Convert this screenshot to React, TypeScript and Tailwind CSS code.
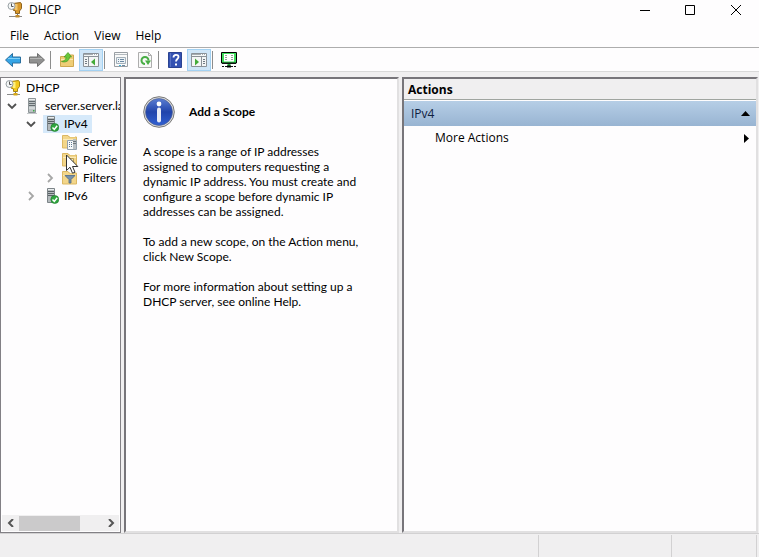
import type { ReactNode } from "react";

function DhcpIcon({ muted = false }: { muted?: boolean }) {
  return (
    <svg viewBox="0 0 16 16" className="h-4 w-4 shrink-0" aria-hidden="true">
      <path d="M6 1.5L13.500 0.500 14.500 2v4.500L12.500 9v2.500h-4V9L6 8z" fill={muted ? "#d9982c" : "#f2c81c"} stroke={muted ? "#8f6420" : "#a8860e"} />
      <path d="M8 2h2.500v6H8z" fill={muted ? "#f2c56c" : "#fff07a"} />
      <path d="M10 11.500h1V14h-1z" fill="#777" />
      <path d="M2 14.500h13" stroke="#8a8a8a" />
      <path d="M8.500 13h4v2.500h-4z" fill={muted ? "#c08a2c" : "#d8a818"} />
      <circle cx="4.500" cy="4" r="3.500" fill="#f4f6f6" stroke="#9aa1a6" />
      <path d="M4.500 1.500v3h2" fill="none" stroke="#555" />
    </svg>
  );
}

function ServerIcon() {
  return (
    <svg viewBox="0 0 16 16" className="h-4 w-4 shrink-0" aria-hidden="true">
      <path d="M4.500 0.500h7v14h-7z" fill="#bcc2c4" stroke="#8d9497" />
      <path d="M5 1.500h6M5 10h6" stroke="#e9edee" />
      <path d="M5 3.500h6M5 5.500h6M5 7.500h6" stroke="#646c70" />
      <path d="M9 12h1.500v1.500H9z" fill="#3ba844" />
      <path d="M3 15.500h10" stroke="#c4c8ca" />
    </svg>
  );
}

function ServerOkIcon() {
  return (
    <svg viewBox="0 0 16 16" className="h-4 w-4 shrink-0" aria-hidden="true">
      <path d="M4.500 0.500h7v14h-7z" fill="#b4babd" stroke="#7d8488" />
      <path d="M5 1.500h6" stroke="#e9edee" />
      <path d="M5 3.500h6M5 5.500h6M5 7.500h6" stroke="#596165" />
      <circle cx="11.800" cy="11.500" r="4" fill="#2fa53e" stroke="#1f7a2b" strokeWidth="0.600" />
      <path d="M9.500 11.500l1.800 1.900 2.900-3.600" fill="none" stroke="#fff" strokeWidth="1.500" />
    </svg>
  );
}

function FolderIcon({ kind }: { kind: "options" | "policies" | "filters" }) {
  return (
    <svg viewBox="0 0 16 16" className="h-4 w-4 shrink-0" aria-hidden="true">
      <path d="M0.500 14V1.500h5.500l1 1.500h7.500V14z" fill="#f3d68a" stroke="#dcb863" />
      <path d="M8 2.500h5" stroke="#fff" />
      <path d="M1 5.500h13" stroke="#fbeab8" />
      {kind === "options" && (
        <>
          <path d="M5.500 6.500h9v9h-9z" fill="#f7f9fa" stroke="#93a1ad" />
          <path d="M11 5h3v10h-3z" fill="#b9c0c5" />
          <path d="M7 8.500h3M7 10.500h3M7 12.500h3" stroke="#5f7b94" strokeDasharray="1 1" />
          <path d="M11 7.500h3M11 9.500h3" stroke="#6d757a" />
        </>
      )}
      {kind === "policies" && <path d="M6.500 6.500h5v6h-5z" fill="#f3e6bb" stroke="#b89d57" />}
      {kind === "filters" && <path d="M3 5.500h10L9 9.500V13H7V9.500z" fill="#7591ad" stroke="#4c6783" strokeWidth="0.800" />}
    </svg>
  );
}

function Chevron({ open = false }: { open?: boolean }) {
  return (
    <svg viewBox="0 0 10 10" className="h-[10px] w-[10px]" aria-hidden="true">
      <path d={open ? "M1 3l4 4 4-4" : "M3 1l4 4-4 4"} fill="none" stroke={open ? "#505050" : "#a6a6a6"} strokeWidth="1.800" />
    </svg>
  );
}

function Arrow({ back = false }: { back?: boolean }) {
  return (
    <svg viewBox="0 0 16 14" className="h-[14px] w-4" aria-hidden="true">
      <path
        d={back ? "M0.500 7L7.500 0.500V4h8v6h-8v3.500z" : "M15.500 7L8.500 0.500V4h-8v6h8v3.500z"}
        fill={back ? "#35a4e6" : "#909090"}
        stroke={back ? "#2a6f9f" : "#707070"}
      />
      <path d={back ? "M3 5.500h12" : "M1 5.500h12"} stroke={back ? "#7fd0f8" : "#b4b4b4"} />
    </svg>
  );
}

function UpFolderIcon() {
  return (
    <svg viewBox="0 0 16 16" className="h-4 w-4" aria-hidden="true">
      <path d="M1.500 14.500v-10h6l1-1.500h6v11.500z" fill="#efcd76" stroke="#cfa850" />
      <path d="M2 7.500h12" stroke="#fbe8ae" />
      <path d="M2.500 9.500C6 9 7 7 7 5H5l4-4.500L12.500 5h-2c0 3.500-3.500 6-8 4.500z" fill="#68c63a" stroke="#44991f" strokeWidth="0.700" />
    </svg>
  );
}

function PaneIcon({ flip = false }: { flip?: boolean }) {
  return (
    <svg viewBox="0 0 16 14" className="h-[14px] w-4" aria-hidden="true">
      <path d="M0.500 0.500h15v13H0.500z" fill="#f4f6f6" stroke="#8b9298" />
      <path d="M1 1.500h14" stroke="#a5acb1" />
      <path d="M1 3.500h14" stroke="#8b9298" />
      <path d="M10 1h1v1h-1zM12 1h1v1h-1zM14 1h1v1h-1z" fill="#fff" />
      <path d={flip ? "M10.500 4v9" : "M5.500 4v9"} stroke="#8b9298" />
      <path d={flip ? "M12 6.500h2M12 8.500h2M12 10.500h2" : "M2 6.500h2M2 8.500h2M2 10.500h2"} stroke="#707a82" />
      <path d={flip ? "M4 5.500l4 3.500-4 3.500z" : "M12 5.500L8 9l4 3.500z"} fill="#43ab3a" />
    </svg>
  );
}

function PropertiesIcon() {
  return (
    <svg viewBox="0 0 16 16" className="h-4 w-4" aria-hidden="true">
      <path d="M1.500 0.500h13v14h-13z" fill="#fafafa" stroke="#9a9fa4" />
      <path d="M2 2.500h12" stroke="#b3b9be" />
      <path d="M3.500 5.500h9v6h-9z" fill="#eef3f6" stroke="#a4b0ba" />
      <path d="M5 7.500h1M7 7.500h4M5 9.500h1M7 9.500h4M9 13.500h3" stroke="#6b88a2" />
      <path d="M6 13.500h2" stroke="#36b4e0" />
    </svg>
  );
}

function RefreshIcon() {
  return (
    <svg viewBox="0 0 16 16" className="h-4 w-4" aria-hidden="true">
      <path d="M1.500 0.500h10l3 3v12h-13z" fill="#f8f8f8" stroke="#adadad" />
      <path d="M11.500 0.500v3h3" fill="none" stroke="#adadad" />
      <path d="M8 12a3.500 3.500 0 1 1 3.500-3.500" fill="none" stroke="#48ad44" strokeWidth="2" />
      <path d="M8 8.500h6L11 13z" fill="#48ad44" />
    </svg>
  );
}

function HelpIcon() {
  return (
    <svg viewBox="0 0 14 16" className="h-4 w-[14px]" aria-hidden="true">
      <path d="M0.500 0.500h13v15h-13z" fill="#3351b2" stroke="#2b4391" />
      <path d="M2.500 1v14" stroke="#5671c4" />
      <path d="M5.500 5.500c0-3.500 5-3.500 5-0.500 0 2-2.500 2-2.500 4.500" fill="none" stroke="#fff" strokeWidth="1.800" />
      <path d="M7 11.500h2v2H7z" fill="#fff" />
    </svg>
  );
}

function MonitorIcon() {
  return (
    <svg viewBox="0 0 16 16" className="h-4 w-4" aria-hidden="true">
      <path d="M0.500 0.500h15v10.500h-15z" fill="#3fdc5c" stroke="#000" />
      <path d="M3 2h10v7.500H3z" fill="#fff" />
      <path d="M4 3.500h2M10 3.500h2M4 5.500h2M10 5.500h2M4 7.500h2M10 7.500h2" stroke="#8fa593" />
      <path d="M1 11.500h14" stroke="#111" />
      <path d="M6.500 12h3v2h-3z" fill="#23a53c" />
      <path d="M1 14.500h5M10 14.500h5" stroke="#111" strokeDasharray="2 1" />
      <path d="M6 14.500h4" stroke="#000" strokeWidth="2" />
    </svg>
  );
}

function InfoIcon() {
  return (
    <svg viewBox="0 0 32 32" className="h-8 w-8 shrink-0" aria-hidden="true">
      <defs>
        <linearGradient id="info-blue" x2="0" y2="1">
          <stop stopColor="#5b7ed2" />
          <stop offset="0.500" stopColor="#2144ab" />
          <stop offset="1" stopColor="#3160d2" />
        </linearGradient>
      </defs>
      <circle cx="16" cy="16" r="15.300" fill="#dedede" stroke="#777" strokeWidth="1" />
      <circle cx="16" cy="16" r="13.500" fill="url(#info-blue)" stroke="#4d5b86" strokeWidth="0.600" />
      <circle cx="16" cy="8" r="2.400" fill="#fff" />
      <path d="M16 13.500v11" stroke="#e9ecf6" strokeWidth="4" strokeLinecap="round" />
    </svg>
  );
}

function Divider() {
  return (
    <span className="flex h-[22px] w-[6px] items-center pl-px">
      <span className="h-[18px] w-px bg-[#8d8d8d]" />
    </span>
  );
}

function ToolButton({ label, active = false, children }: { label: string; active?: boolean; children: ReactNode }) {
  return (
    <button
      aria-label={label}
      className={`flex h-[22px] w-6 items-center justify-center ${active ? "border border-[#a3d1f2] bg-[#cfe6f8]" : ""}`}
    >
      {children}
    </button>
  );
}

type TreeRowProps = { indent: string; open?: boolean; icon: ReactNode; label: string; selected?: boolean };

function TreeRow({ indent, open, icon, label, selected = false }: TreeRowProps) {
  return (
    <li className={`flex h-[18px] items-center whitespace-nowrap ${indent}`}>
      <span className="flex w-[17px] shrink-0 items-center">
        {open !== undefined && (
          <button aria-label={`Toggle ${label}`}>
            <Chevron open={open} />
          </button>
        )}
      </span>
      <span className={`flex h-[18px] items-center gap-[5px] pr-1 ${selected ? "bg-[#d6e9fa]" : ""}`}>
        {icon}
        {label}
      </span>
    </li>
  );
}

export default function App() {
  return (
    <div className="flex h-screen flex-col overflow-hidden bg-[#f0eff0] font-['Open_Sans','Noto_Sans',sans-serif] text-xs text-black">
      <header className="flex h-5 shrink-0 items-center bg-[#fefdfe] pl-[7px]">
        <DhcpIcon muted />
        <h1 className="flex-1 pl-[6px]">DHCP</h1>
        <button aria-label="Minimize" className="flex w-[45px] justify-center pb-px">
          <svg viewBox="0 0 10 10" className="h-[10px] w-[10px]"><path d="M0 5.500h10" stroke="#000" /></svg>
        </button>
        <button aria-label="Maximize" className="flex w-[46px] justify-center pb-px">
          <svg viewBox="0 0 10 10" className="h-[10px] w-[10px]"><path d="M0.500 0.500h9v9h-9z" fill="none" stroke="#000" /></svg>
        </button>
        <button aria-label="Close" className="flex w-[46px] justify-center pb-px">
          <svg viewBox="0 0 10 10" className="h-[10px] w-[10px]"><path d="M0 0l10 10M10 0L0 10" stroke="#000" /></svg>
        </button>
      </header>
      <nav className="flex h-[27px] shrink-0 items-center gap-[15px] bg-[#fefdfe] pt-[5px] pl-[10px]">
        <button>File</button>
        <button>Action</button>
        <button>View</button>
        <button>Help</button>
      </nav>
      <div className="flex h-[25px] shrink-0 items-end border-y border-t-[#adadad] border-b-[#d9d9d9] bg-[#fefdfe] pl-px">
        <ToolButton label="Back"><Arrow back /></ToolButton>
        <ToolButton label="Forward"><Arrow /></ToolButton>
        <Divider />
        <ToolButton label="Up one level"><UpFolderIcon /></ToolButton>
        <ToolButton label="Show or hide console tree" active><PaneIcon /></ToolButton>
        <Divider />
        <ToolButton label="Properties"><PropertiesIcon /></ToolButton>
        <ToolButton label="Refresh"><RefreshIcon /></ToolButton>
        <Divider />
        <ToolButton label="Help contents"><HelpIcon /></ToolButton>
        <ToolButton label="Show or hide action pane" active><PaneIcon flip /></ToolButton>
        <Divider />
        <ToolButton label="Server status"><MonitorIcon /></ToolButton>
      </div>

      <main className="flex min-h-0 flex-1 gap-[3px] pt-[5px]">
        <aside className="relative flex w-[121px] shrink-0 flex-col border border-[#828085] bg-[#fefdfe] font-[Lato,'Open_Sans',sans-serif]">
          <ul className="flex-1 overflow-hidden pt-px">
            <li className="flex h-[18px] items-center gap-[5px] pl-[4px]"><DhcpIcon />DHCP</li>
            <TreeRow indent="pl-[6px]" open icon={<ServerIcon />} label="server.server.la" />
            <TreeRow indent="pl-[25px]" open icon={<ServerOkIcon />} label="IPv4" selected />
            <TreeRow indent="pl-[44px]" icon={<FolderIcon kind="options" />} label="Server" />
            <TreeRow indent="pl-[44px]" icon={<FolderIcon kind="policies" />} label="Policie" />
            <TreeRow indent="pl-[44px]" open={false} icon={<FolderIcon kind="filters" />} label="Filters" />
            <TreeRow indent="pl-[25px]" open={false} icon={<ServerOkIcon />} label="IPv6" />
          </ul>
          <svg viewBox="0 0 13 20" className="absolute top-[76px] left-[65px] h-5 w-[13px]" aria-hidden="true">
            <path d="M0.500 1v15.500l3.500-3.300 2.500 6 2.500-1-2.500-5.700h5.300z" fill="#fff" stroke="#333" />
          </svg>
          <div className="m-px flex h-4 shrink-0 items-center bg-[#f0eff0]">
            <button aria-label="Scroll left" className="flex w-[17px] justify-center">
              <svg viewBox="0 0 8 8" className="h-2 w-2"><path d="M6 0L2 4l4 4" fill="none" stroke="#555" strokeWidth="2" /></svg>
            </button>
            <span className="h-[15px] w-[61px] bg-[#cbcacb]" />
            <button aria-label="Scroll right" className="ml-auto flex w-[17px] justify-center">
              <svg viewBox="0 0 8 8" className="h-2 w-2"><path d="M2 0l4 4-4 4" fill="none" stroke="#555" strokeWidth="2" /></svg>
            </button>
          </div>
        </aside>

        <section className="w-[275px] shrink-0 border-2 border-t-[#77757a] border-r-[#e1e0e1] border-b-[#e1e0e1] border-l-[#77757a] bg-[#fefdfe] px-[17px] pt-[17px] font-[Lato,'Open_Sans',sans-serif]">
          <div className="flex items-center gap-[14px]">
            <InfoIcon />
            <h2 className="font-bold">Add a Scope</h2>
          </div>
          <div className="flex flex-col gap-[15px] pt-4 leading-[15px]">
            <p>A scope is a range of IP addresses<br />assigned to computers requesting a<br />dynamic IP address. You must create and<br />configure a scope before dynamic IP<br />addresses can be assigned.</p>
            <p>To add a new scope, on the Action menu,<br />click New Scope.</p>
            <p>For more information about setting up a<br />DHCP server, see online Help.</p>
          </div>
        </section>

        <section className="mr-px flex-1 border-2 border-t-[#77757a] border-r-[#e1e0e1] border-b-[#e1e0e1] border-l-[#77757a] bg-[#fefdfe]">
          <h2 className="flex h-[21px] items-center border-b border-[#a0a5a0] bg-[#f0eff0] pt-px pl-[4px] font-bold">Actions</h2>
          <button className="mt-px flex h-[25px] w-full items-center justify-between bg-linear-to-b from-[#b6cee6] to-[#98b4d2] pr-[6px] pl-[7px] text-[#10213f]">
            IPv4
            <svg viewBox="0 0 9 5" className="h-[5px] w-[9px]"><path d="M0 5L4.500 0 9 5z" fill="#000" /></svg>
          </button>
          <button className="flex h-6 w-full items-center justify-between pr-[7px] pl-[31px]">
            More Actions
            <svg viewBox="0 0 5 9" className="h-[9px] w-[5px]"><path d="M0 0l5 4.500L0 9z" fill="#000" /></svg>
          </button>
        </section>
      </main>
      <footer className="flex h-6 shrink-0 border-t border-[#d2d1d2] pt-px pr-[2px]">
        <span className="flex-1 border-r border-[#d2d1d2]" />
        <span className="w-[133px] border-r border-[#d2d1d2]" />
        <span className="w-[85px] border-r border-[#d2d1d2]" />
      </footer>
    </div>
  );
}
